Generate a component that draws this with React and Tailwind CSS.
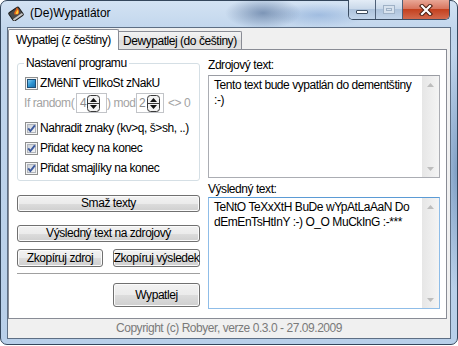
import React from "react";

function Check() {
  return (
    <svg width="13" height="13" viewBox="0 0 13 13" className="shrink-0">
      <defs>
        <linearGradient id="cbg" x1="0" y1="0" x2="1" y2="1">
          <stop offset="0" stopColor="#c9ced6" />
          <stop offset="1" stopColor="#f7f7f7" />
        </linearGradient>
      </defs>
      <rect x="0.5" y="0.5" width="12" height="12" fill="#f4f4f4" stroke="#8e8f8f" />
      <rect x="2.5" y="2.5" width="8" height="8" fill="url(#cbg)" stroke="#b0b5bc" />
      <path d="M3.2 6.4 L5.4 9 L9.9 3.3" fill="none" stroke="#3d5a9e" strokeWidth="1.9" />
    </svg>
  );
}

function Indet() {
  return (
    <svg width="13" height="13" viewBox="0 0 13 13" className="shrink-0">
      <defs>
        <linearGradient id="blu" x1="0" y1="0" x2="1" y2="1">
          <stop offset="0" stopColor="#8fd3f5" />
          <stop offset="0.5" stopColor="#2f96d4" />
          <stop offset="1" stopColor="#1a6aa6" />
        </linearGradient>
      </defs>
      <rect x="0.5" y="0.5" width="12" height="12" fill="#f4f4f4" stroke="#8e8f8f" />
      <rect x="2.5" y="2.5" width="8" height="8" fill="url(#blu)" stroke="#1d4f78" />
    </svg>
  );
}

function SpinGlyph() {
  return (
    <svg width="13" height="17" viewBox="0 0 13 17" className="shrink-0">
      <rect x="0.5" y="0.5" width="12" height="16" rx="3" fill="#f2f2f2" stroke="#3a3a3a" />
      <line x1="1" y1="8.5" x2="12" y2="8.5" stroke="#3a3a3a" />
      <path d="M3 7 L6.5 3 L10 7Z" fill="#111" />
      <path d="M3 10 L6.5 14 L10 10Z" fill="#111" />
    </svg>
  );
}

function AppIcon() {
  return (
    <svg width="16" height="16" viewBox="0 0 16 16" className="shrink-0">
      <g transform="rotate(-35 8 9)">
        <rect x="2" y="4" width="12" height="10" rx="1.5" fill="#4b4b4b" stroke="#1e1e1e" />
        <rect x="2.5" y="11.5" width="11" height="2" fill="#c8c8c8" />
      </g>
      <path d="M6.5 9.5 C5.5 6.5 8.5 5.5 8.6 2.2 C11 4.2 12.2 7 10 9.6 Z" fill="#e9671a" />
      <path d="M7.8 9 C7.6 7.3 9.2 6.3 9.4 4.8 C10.6 6.3 10.6 8 9.5 9 Z" fill="#ffd43a" />
    </svg>
  );
}

function Btn({ children, className }) {
  return (
    <div
      className={
        "flex items-center justify-center rounded-[3px] border border-[#707070] bg-[linear-gradient(#f2f2f2_0%,#ebebeb_50%,#dddddd_50%,#cfcfcf_100%)] shadow-[inset_0_0_0_1px_#fbfbfb] text-black whitespace-nowrap " +
        className
      }
    >
      {children}
    </div>
  );
}

function ScrollBar() {
  return (
    <div className="w-[17px] shrink-0 bg-[linear-gradient(90deg,#e6e6e6,#f4f4f4)] flex flex-col justify-between">
      <div className="h-[17px] flex items-center justify-center">
        <svg width="7" height="4" viewBox="0 0 7 4">
          <path d="M0 4 L3.5 0 L7 4Z" fill="#bdbdbd" />
        </svg>
      </div>
      <div className="h-[17px] flex items-center justify-center">
        <svg width="7" height="4" viewBox="0 0 7 4">
          <path d="M0 0 L3.5 4 L7 0Z" fill="#bdbdbd" />
        </svg>
      </div>
    </div>
  );
}

export default function App() {
  return (
    <div className="w-[458px] h-[346px] bg-white font-['Liberation_Sans',Arial,sans-serif] text-[12px] leading-[15px] tracking-[-0.45px] text-black">
      <div className="w-[458px] h-[345px] rounded-[7px] border border-[#34465c] flex flex-col px-[6px] pb-[5px] bg-[radial-gradient(ellipse_38px_16px_at_262px_12px,rgba(60,90,135,0.55),transparent),radial-gradient(ellipse_50px_12px_at_318px_14px,rgba(110,150,205,0.45),transparent),radial-gradient(ellipse_14px_120px_at_455px_170px,rgba(70,110,160,0.5),transparent),linear-gradient(180deg,#d3e2f3_0px,#c0d5ec_30px,#b8cfe9_100%)]">
        {/* title bar */}
        <div className="h-[26px] flex items-start shrink-0">
          <div className="flex items-center pt-[4px] pl-[1px]">
            <AppIcon />
            <span className="ml-[6px] text-[12px] leading-[16px] tracking-normal text-black">(De)Wypatlátor</span>
          </div>
          <div className="ml-auto mr-[1px] mt-[-1px] flex h-[20px] rounded-b-[5px] border border-t-0 border-[#3b4d63] overflow-hidden">
            <div className="w-[27px] border-r border-[#4f6078] bg-[linear-gradient(#e3ecf6,#cad9ea_45%,#aec3dc_50%,#c3d5ea)] flex items-end justify-center pb-[5px]">
              <div className="w-[12px] h-[4px] bg-white border border-[#3d4c5e] rounded-[1px]" />
            </div>
            <div className="w-[27px] border-r border-[#4f6078] bg-[linear-gradient(#e3ecf6,#cad9ea_45%,#aec3dc_50%,#c3d5ea)] flex items-center justify-center">
              <div className="w-[12px] h-[9px] border border-[#9fb1c6] bg-[#d7e2ee] flex items-center justify-center">
                <div className="w-[6px] h-[3px] border border-[#9fb1c6]" />
              </div>
            </div>
            <div className="w-[46px] bg-[linear-gradient(#e9a796,#d8765f_45%,#c4411f_50%,#d26a4e)] flex items-center justify-center">
              <svg width="14" height="12" viewBox="0 0 14 12">
                <path d="M3 2 L11 10 M11 2 L3 10" stroke="#4a1d10" strokeWidth="4.2" strokeLinecap="square" />
                <path d="M3 2 L11 10 M11 2 L3 10" stroke="#ffffff" strokeWidth="2.2" strokeLinecap="square" />
              </svg>
            </div>
          </div>
        </div>

        {/* client */}
        <div className="flex-1 border border-[#5d6e84] bg-[#f0f0f0] flex flex-col">
          {/* tabs */}
          <div className="h-[21px] shrink-0 flex items-end">
            <div className="relative z-10 h-[21px] mb-[-1px] w-[111px] border border-b-0 border-[#898c95] rounded-t-[2px] bg-white flex items-center pl-[7px] whitespace-nowrap">
              Wypatlej (z češtiny)
            </div>
            <div className="h-[18px] w-[123px] border border-l-0 border-b-0 border-[#898c95] rounded-tr-[2px] bg-[linear-gradient(#f3f3f3,#e6e6e6_50%,#dcdcdc_50%,#e4e4e4)] flex items-center pl-[4px] pt-[1px] whitespace-nowrap">
              Dewypatlej (do češtiny)
            </div>
          </div>

          {/* panel */}
          <div className="h-[270px] shrink-0 mr-[3px] border border-[#898c95] bg-white flex pl-[8px]">
            {/* left column */}
            <div className="w-[183px] flex flex-col">
              <fieldset className="mt-[6px] border border-[#d5dfe5] rounded-[3px] pb-[2px]">
                <legend className="ml-[6px] px-[2px] leading-[15px]">Nastavení programu</legend>
                <div className="flex flex-col pl-[7px] pt-[2px]">
                  <div className="h-[20px] flex items-center gap-[2px]">
                    <Indet />
                    <span>ZMěNiT vElIkoSt zNakU</span>
                  </div>
                  <div className="h-[20px] flex items-center ml-[-1px] text-[#a3a3a3] whitespace-nowrap">
                    <span className="w-[52px] shrink-0">If random(</span>
                    <div className="w-[31px] shrink-0 h-[20px] border border-[#c2c4c8] bg-white flex items-center">
                      <span className="pl-[3px] text-[#8a8a8a]">4</span>
                      <span className="ml-[1px]"><SpinGlyph /></span>
                    </div>
                    <span className="w-[29px] shrink-0">) mod</span>
                    <div className="w-[28px] shrink-0 h-[20px] border border-[#c2c4c8] bg-white flex items-center">
                      <span className="pl-[2px] text-[#8a8a8a]">2</span>
                      <span className="ml-[2px]"><SpinGlyph /></span>
                    </div>
                    <span className="ml-[4px] shrink-0">&lt;&gt; 0</span>
                  </div>
                  <div className="h-[20px] mt-[5px] flex items-center gap-[2px] whitespace-nowrap">
                    <Check />
                    <span>Nahradit znaky (kv&gt;q, š&gt;sh, ..)</span>
                  </div>
                  <div className="h-[20px] flex items-center gap-[2px]">
                    <Check />
                    <span>Přidat kecy na konec</span>
                  </div>
                  <div className="h-[20px] flex items-center gap-[2px]">
                    <Check />
                    <span>Přidat smajlíky na konec</span>
                  </div>
                </div>
              </fieldset>

              <Btn className="mt-[14px] h-[17px]">Smaž texty</Btn>
              <Btn className="mt-[13px] h-[17px]">Výsledný text na zdrojový</Btn>
              <div className="mt-[7px] flex justify-between">
                <Btn className="w-[86px] h-[18px]">Zkopíruj zdroj</Btn>
                <Btn className="w-[87px] h-[18px]">Zkopíruj výsledek</Btn>
              </div>
              <div className="mt-[6px] h-[1px] bg-[#a0a0a0]" />
              <Btn className="mt-[9px] h-[24px] w-[87px] self-end">Wypatlej</Btn>
            </div>

            {/* right column */}
            <div className="w-[232px] ml-[8px] flex flex-col">
              <div className="mt-[8px] h-[15px]">Zdrojový text:</div>
              <div className="mt-[2px] h-[103px] border border-[#abadb3] border-t-[#9a9ca3] bg-white flex">
                <div className="flex-1 pl-[5px] pt-[2px] whitespace-nowrap">
                  Tento text bude vypatlán do dementštiny
                  <br />
                  :-)
                </div>
                <ScrollBar />
              </div>
              <div className="mt-[4px] h-[15px]">Výsledný text:</div>
              <div className="h-[112px] border border-[#8fbde8] border-t-[#5b9bd5] bg-white flex">
                <div className="flex-1 pl-[5px] pt-[2px] whitespace-nowrap">
                  TeNtO TeXxXtH BuDe wYpAtLaAaN Do
                  <br />
                  dEmEnTsHtInY :-) O_O MuCkInG :-***
                </div>
                <ScrollBar />
              </div>
            </div>
          </div>

          {/* status */}
          <div className="flex-1 flex items-center justify-center text-[#7a7a7a]">
            Copyright (c) Robyer, verze 0.3.0 - 27.09.2009
          </div>
        </div>
      </div>
    </div>
  );
}
